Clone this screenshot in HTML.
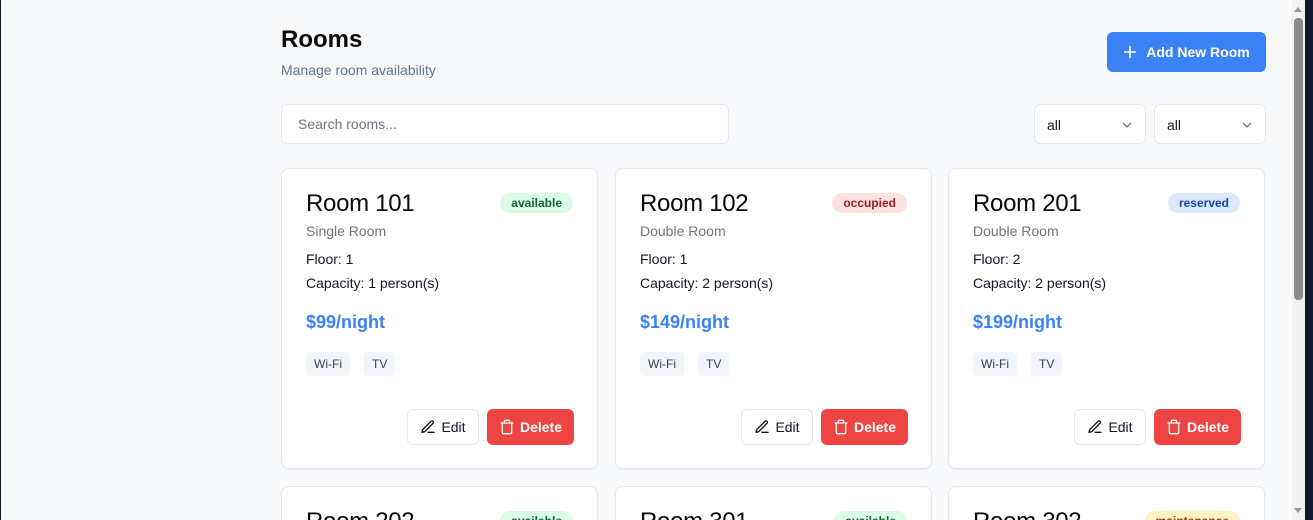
<!DOCTYPE html>
<html style="width:1313px;height:520px;overflow:hidden"><head><style>
*{box-sizing:border-box;margin:0;padding:0}
body{width:1313px;height:520px;overflow:hidden;background:#f8fafc;font-family:"Liberation Sans",Arial,sans-serif;position:relative;color:#0f172a}
.lb{position:absolute;left:0;top:0;width:1px;height:520px;background:#111827}
.rb{position:absolute;left:1305px;top:0;width:8px;height:520px;background:#111827}
.sb{position:absolute;left:1292px;top:0;width:13px;height:520px;background:#f1f1f1}
.th{position:absolute;left:1294px;top:18px;width:9px;height:282px;background:#8c8c8c;border-radius:4px}
.ar{position:absolute;left:1294px;width:0;height:0;border-left:4px solid transparent;border-right:4px solid transparent}
h1{position:absolute;left:281px;top:26px;font-size:24px;font-weight:700;color:#0a0a0a}
.sub{position:absolute;left:281px;top:62px;font-size:14px;color:#64748b}
.add{position:absolute;left:1107px;top:32px;width:159px;height:40px;background:#3b82f6;border-radius:6px;color:#fff;font-size:14px;font-weight:700;display:flex;align-items:center;justify-content:center;gap:9px}
.search{position:absolute;left:281px;top:104px;width:448px;height:40px;background:#fff;border:1px solid #e2e8f0;border-radius:6px;font-size:14px;color:#6b7280;padding:11px 16px}
.sel{position:absolute;top:104px;width:112px;height:40px;background:#fff;border:1px solid #e2e8f0;border-radius:6px;font-size:14px;padding:12px 12px;color:#0f172a}
.sel svg{position:absolute;right:12px;top:14px}
.card{position:absolute;width:317px;height:301px;background:#fff;border:1px solid #e2e8f0;border-radius:8px;box-shadow:0 1px 2px rgba(0,0,0,.05)}
.card h2{position:absolute;left:24px;top:21px;font-size:24px;font-weight:400;color:#0a0a0a;letter-spacing:-.3px}
.badge{position:absolute;right:24px;top:24px;height:20px;padding:0 11px;border-radius:10px;font-size:12px;font-weight:700;line-height:20px}
.type{position:absolute;left:24px;top:54px;font-size:14px;color:#737373}
.l1{position:absolute;left:24px;top:82px;font-size:14px}
.l2{position:absolute;left:24px;top:106px;font-size:14px}
.price{position:absolute;left:24px;top:143px;font-size:18px;font-weight:700;color:#3b82f6}
.tag{position:absolute;top:183px;height:24px;padding:0 8px;background:#f1f5f9;border-radius:4px;font-size:12px;line-height:24px;color:#334155}
.edit{position:absolute;left:125px;top:240px;width:72px;height:36px;border:1px solid #e2e8f0;border-radius:6px;background:#fff;font-size:14px;display:flex;align-items:center;justify-content:center;gap:5px}
.del{position:absolute;left:205px;top:240px;width:87px;height:36px;border-radius:6px;background:#ef4444;color:#fff;font-size:14px;font-weight:700;display:flex;align-items:center;justify-content:center;gap:5px}
</style></head><body>
<div class="lb"></div>
<h1>Rooms</h1>
<div class="sub">Manage room availability</div>
<div class="add"><svg width="14" height="14" viewBox="0 0 14 14"><path d="M7 1v12M1 7h12" stroke="#fff" stroke-width="1.6"/></svg>Add New Room</div>
<div class="search">Search rooms...</div>
<div class="sel" style="left:1034px">all<svg width="12" height="12" viewBox="0 0 12 12"><path d="M2 4l4 4 4-4" fill="none" stroke="#6b7280" stroke-width="1.3"/></svg></div>
<div class="sel" style="left:1154px">all<svg width="12" height="12" viewBox="0 0 12 12"><path d="M2 4l4 4 4-4" fill="none" stroke="#6b7280" stroke-width="1.3"/></svg></div>

<div class="card" style="left:281px;top:168px">
<h2>Room 101</h2><div class="badge" style="background:#dcfce7;color:#166534">available</div>
<div class="type">Single Room</div><div class="l1">Floor: 1</div><div class="l2">Capacity: 1 person(s)</div>
<div class="price">$99/night</div><div class="tag" style="left:24px">Wi-Fi</div><div class="tag" style="left:82px">TV</div>
<div class="edit"><svg width="16" height="16" viewBox="0 0 24 24" fill="none" stroke="#111" stroke-width="2" stroke-linecap="round" stroke-linejoin="round"><path d="M12 20h9M16.5 3.5a2.1 2.1 0 013 3L7 19l-4 1 1-4z"/></svg>Edit</div>
<div class="del"><svg width="16" height="16" viewBox="0 0 24 24" fill="none" stroke="#fff" stroke-width="2" stroke-linecap="round" stroke-linejoin="round"><path d="M3 6h18M19 6v14a2 2 0 01-2 2H7a2 2 0 01-2-2V6M8 6V4a2 2 0 012-2h4a2 2 0 012 2v2"/></svg>Delete</div>
</div>
<div class="card" style="left:615px;top:168px">
<h2>Room 102</h2><div class="badge" style="background:#fee2e2;color:#991b1b">occupied</div>
<div class="type">Double Room</div><div class="l1">Floor: 1</div><div class="l2">Capacity: 2 person(s)</div>
<div class="price">$149/night</div><div class="tag" style="left:24px">Wi-Fi</div><div class="tag" style="left:82px">TV</div>
<div class="edit"><svg width="16" height="16" viewBox="0 0 24 24" fill="none" stroke="#111" stroke-width="2" stroke-linecap="round" stroke-linejoin="round"><path d="M12 20h9M16.5 3.5a2.1 2.1 0 013 3L7 19l-4 1 1-4z"/></svg>Edit</div>
<div class="del"><svg width="16" height="16" viewBox="0 0 24 24" fill="none" stroke="#fff" stroke-width="2" stroke-linecap="round" stroke-linejoin="round"><path d="M3 6h18M19 6v14a2 2 0 01-2 2H7a2 2 0 01-2-2V6M8 6V4a2 2 0 012-2h4a2 2 0 012 2v2"/></svg>Delete</div>
</div>
<div class="card" style="left:948px;top:168px">
<h2>Room 201</h2><div class="badge" style="background:#dbeafe;color:#1e40af">reserved</div>
<div class="type">Double Room</div><div class="l1">Floor: 2</div><div class="l2">Capacity: 2 person(s)</div>
<div class="price">$199/night</div><div class="tag" style="left:24px">Wi-Fi</div><div class="tag" style="left:82px">TV</div>
<div class="edit"><svg width="16" height="16" viewBox="0 0 24 24" fill="none" stroke="#111" stroke-width="2" stroke-linecap="round" stroke-linejoin="round"><path d="M12 20h9M16.5 3.5a2.1 2.1 0 013 3L7 19l-4 1 1-4z"/></svg>Edit</div>
<div class="del"><svg width="16" height="16" viewBox="0 0 24 24" fill="none" stroke="#fff" stroke-width="2" stroke-linecap="round" stroke-linejoin="round"><path d="M3 6h18M19 6v14a2 2 0 01-2 2H7a2 2 0 01-2-2V6M8 6V4a2 2 0 012-2h4a2 2 0 012 2v2"/></svg>Delete</div>
</div>
<div class="card" style="left:281px;top:486px;height:34px;border-bottom:none;border-radius:8px 8px 0 0"><h2>Room 202</h2><div class="badge" style="background:#dcfce7;color:#166534">available</div></div>
<div class="card" style="left:615px;top:486px;height:34px;border-bottom:none;border-radius:8px 8px 0 0"><h2>Room 301</h2><div class="badge" style="background:#dcfce7;color:#166534">available</div></div>
<div class="card" style="left:948px;top:486px;height:34px;border-bottom:none;border-radius:8px 8px 0 0"><h2>Room 302</h2><div class="badge" style="background:#fef3c7;color:#92400e">maintenance</div></div>

<div class="sb"></div><div class="th"></div>
<div class="ar" style="top:7px;border-bottom:5px solid #999"></div>
<div class="ar" style="top:508px;border-top:5px solid #999"></div>
<div class="rb"></div>
</body></html>
